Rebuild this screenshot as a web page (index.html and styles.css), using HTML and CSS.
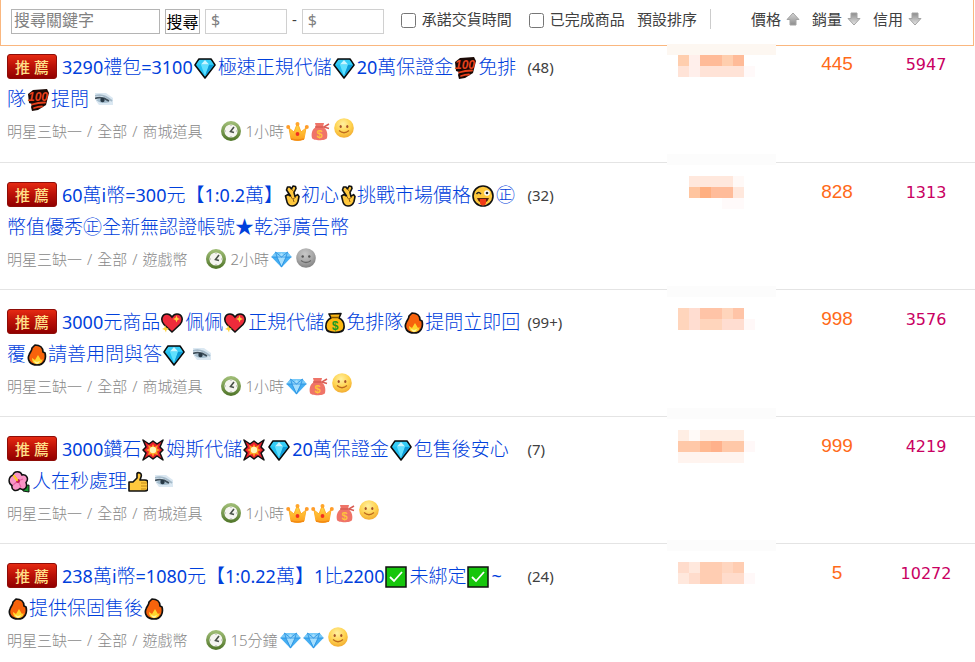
FILE: index.html
```html
<!DOCTYPE html>
<html lang="zh-Hant">
<head>
<meta charset="utf-8">
<meta name="viewport" content="width=device-width, initial-scale=1">
<title>商品列表</title>
<link rel="stylesheet" href="styles.css">
</head>
<body>
<svg class="paints" aria-hidden="true">
  <defs>
    <linearGradient id="g-arrow" x1="0" y1="0" x2="0" y2="1"><stop offset="0" stop-color="#d8d8d8"/><stop offset="1" stop-color="#8c8c8c"/></linearGradient>
    <linearGradient id="g-arrow-down" x1="0" y1="0" x2="0" y2="1"><stop offset="0" stop-color="#8c8c8c"/><stop offset="1" stop-color="#e6e6e6"/></linearGradient>
    <linearGradient id="g-ring" x1="0" y1="0" x2="0" y2="1"><stop offset="0" stop-color="#9dbb74"/><stop offset="1" stop-color="#557a2e"/></linearGradient>
    <linearGradient id="g-crown" x1="0" y1="0" x2="0" y2="1"><stop offset="0" stop-color="#ffe04a"/><stop offset="1" stop-color="#ff9d1c"/></linearGradient>
    <radialGradient id="g-smile" cx=".45" cy=".3" r=".75"><stop offset="0" stop-color="#fff0a0"/><stop offset=".55" stop-color="#ffd350"/><stop offset="1" stop-color="#f0a52c"/></radialGradient>
    <radialGradient id="g-grey" cx=".45" cy=".3" r=".75"><stop offset="0" stop-color="#c8c8c8"/><stop offset=".55" stop-color="#a8a8a8"/><stop offset="1" stop-color="#7c7c7c"/></radialGradient>
  </defs>
</svg>
<svg class="sprite" aria-hidden="true">
  <symbol id="gem" viewBox="0 0 22 22">
    <path d="M5 2h12l4 6-10 13L1 8z" fill="#22c0f0" stroke="#0a0a0a" stroke-width="1.6" stroke-linejoin="round"/>
    <path d="M5.4 3h11.2l3.2 4.6H2.200z" fill="#35cdf6"/>
    <path d="M7 7.500L11 3l4 4.500z" fill="#c8f5ff"/><path d="M7 8h8l-4 11z" fill="#5fe0ff"/><path d="M15 8h5l-9 11z" fill="#0f9ad6"/>
  </symbol>
  <symbol id="hundred" viewBox="0 0 22 22">
    <path d="M1 5l5-4 14-1 2 4-2 8-1 4-8 5-6 1-1-4 1-3-3-1z" fill="#1b0905"/>
    <text x="1" y="12" font-family="Liberation Sans, sans-serif" font-size="12" font-weight="bold" font-style="italic" fill="#e8401c">100</text>
    <path d="M5 15.500q6-2 13-2M7 19q4-1.500 8-1.500" stroke="#e8401c" stroke-width="1.800" fill="none" stroke-linecap="round"/>
  </symbol>
  <symbol id="fingers" viewBox="0 0 16 22">
    <path d="M8 21c-3 0-5-2.500-5.500-6L1.500 11l2.500-1.500L6.500 11 2.500 5 3.500 2 6 2l1.500 2L9 1l2.500.5.5 2-2 4 1 4 2.500-2 1.500 2-1 5c-1 3-3 4.500-6 4.500z" fill="#ffc83d" stroke="#111" stroke-width="1.600" stroke-linejoin="round"/>
    <path d="M6.500 11l2 3M10 7L7.500 4M12 12l-3 2 1 3" fill="none" stroke="#8b5b12"/>
  </symbol>
  <symbol id="wink" viewBox="0 0 22 22">
    <circle cx="11" cy="11" r="10" fill="#ffc83d" stroke="#111" stroke-width="1.600"/>
    <circle cx="15" cy="8" r="2.800" fill="#fff"/><circle cx="15" cy="8" r="1.300" fill="#222"/>
    <path d="M4.500 9q2-3 4.500 0" fill="none" stroke="#222" stroke-width="1.500"/>
    <path d="M5 13h12q-1 3-3 4H8q-2-1-3-4z" fill="#5c2410"/><path d="M8 14h6v3.500q0 3-3 3t-3-3z" fill="#f03a17"/>
  </symbol>
  <symbol id="heart" viewBox="0 0 22 22">
    <path d="M11 20L3 12.500C-1 8 1 2 6 2q3 0 5 3 2-3 5-3c5 0 7 6 3 10.500z" fill="#ee2b3b" stroke="#111" stroke-width="1.600"/>
    <path d="M15.500 3.500l1 2.500 2.500 1-2.500 1-1 2.500-1-2.500-2.500-1 2.500-1z" fill="#ffd23c"/>
    <path d="M4 13l1 2.500L8 17l-2.500 1L5 20.500 3.800 18 1 17l2.500-1.200z" fill="#ffd23c"/>
  </symbol>
  <symbol id="money" viewBox="1 0 20 22">
    <path d="M5 2l12-.500L15 6c4 2 5.500 6 5 10-.5 3-3 4.500-9 4.500S2.500 19 2 16c-.5-4 1-8 5-10z" fill="#fdb813" stroke="#111" stroke-width="1.600" stroke-linejoin="round"/>
    <path d="M7 5.500h8" stroke="#7c5300" stroke-width="1.500"/>
    <text x="11" y="18" text-anchor="middle" font-family="Liberation Sans, sans-serif" font-size="12" font-weight="bold" fill="#169b24">$</text>
  </symbol>
  <symbol id="fire" viewBox="1 0 20 22">
    <path d="M9 1c5 0 8 3 8 7l2 1c1.500 6-1 12-8 12S1 16 3 11c1-3 3-4 3-7z" fill="#f7630c" stroke="#111" stroke-width="1.700" stroke-linejoin="round"/>
    <path d="M6 14l3 2 3-5 3 5 1.500-1c0 3-2 5-5.500 5s-5-3-5-6z" fill="#ffd52e"/><path d="M8 17l3 1 3-1q-1 3-3 3t-3-3z" fill="#fff49c"/>
  </symbol>
  <symbol id="boom" viewBox="0 0 22 22">
    <path d="M1 1l6 4 4-3 4 3 6-4-3 7 3 3-3 3 3 7-6-4-4 3-4-3-6 4 3-7-3-3 3-3z" fill="#e9202b" stroke="#111" stroke-width="1.500" stroke-linejoin="round"/>
    <path d="M11 5l1.500 3L16 6l-1 3.500 3 1.500-3 1.500L16 16l-3.500-1-1.500 3-1.500-3L6 16l1-3.500L4 11l3-1.500L6 6l3.500 2z" fill="#ff9c20"/>
    <circle cx="11" cy="11" r="3.200" fill="#fff6b8"/>
  </symbol>
  <symbol id="flower" viewBox="0 0 22 22">
    <path d="M14 15l7-1v7l-6-1z" fill="#179b30" stroke="#111"/>
    <path d="M5 4C6-.5 13 0 14 4c5-1 7 4 4 7.500 2 5.500-2 8.500-6 6-4 4-9 1.500-8-3C0 12.500 0 6 5 4z" fill="#f995c6" stroke="#111" stroke-width="1.500"/>
    <path d="M10 10L7 5M10 10l5-2M10 10l3 6M10 10l-5 4" stroke="#e65fa5" stroke-width="1.200"/>
    <circle cx="10" cy="10" r="2" fill="#c01c50"/><path d="M9 9L6 5" stroke="#ffc928" stroke-width="2.200" stroke-linecap="round"/>
  </symbol>
  <symbol id="thumb" viewBox="1 0 20 22">
    <path d="M2 11h4l4-4V2.500Q11 1 13 2q2 1 1 4l-1 3h5q3 0 3 3v5q0 3-3 3H2z" fill="#ffc83d" stroke="#111" stroke-width="1.600" stroke-linejoin="round"/>
    <path d="M14 12h6M14 15h6M14 18h5" stroke="#b37b11" stroke-width=".8"/>
  </symbol>
  <symbol id="check" viewBox="0 0 22 22">
    <path d="M1 1h20v20H1z" fill="#16c60c" stroke="#111" stroke-width="1.500"/>
    <path d="M5 11l4 4 8-9" fill="none" stroke="#fff" stroke-width="1.800"/>
  </symbol>
  <symbol id="eye" viewBox="0 0 18 13">
    <path d="M0 0h11l7 5v7H4L1 8z" fill="#dbe8f2"/><path d="M0 3q8-3 17 5" fill="none" stroke="#a5bac9" stroke-width="1.800"/>
    <path d="M1 7q6-4 14 2-7 2-11 0z" fill="#a3bbcb"/><path d="M0 5.500q7-2.500 14 2.500" fill="none" stroke="#3e4e5a" stroke-width="1.700"/>
    <circle cx="7.500" cy="7" r="2.200" fill="#283946"/>
  </symbol>
  <symbol id="clock" viewBox="0 0 20 20">
    <circle cx="10" cy="10" r="8.300" fill="#f5f5f0" stroke="url(#g-ring)" stroke-width="3.400"/>
    <path d="M13 6l-3.500 4.500 3.500 1" fill="none" stroke="#485048" stroke-width="1.600"/>
    <path d="M10 4v1M10 15v1M4 10h1M15 10h1" stroke="#aaa"/>
  </symbol>
  <symbol id="crown" viewBox="0 0 23 19">
    <path d="M3 6l5 4 3.500-9L15 10l5-4-2 11q-6 3-13 0z" fill="url(#g-crown)" stroke="#ffad28"/>
    <circle cx="2.200" cy="5" r="2" fill="#ff9d2a"/><circle cx="20.800" cy="5" r="2" fill="#ff9d2a"/><circle cx="11.500" cy="2" r="2" fill="#ffa62c"/>
    <path d="M5 17q6 2 13 0" fill="none" stroke="#f28a13" stroke-width="1.500"/><circle cx="11.500" cy="12" r="1.900" fill="#f23020"/>
  </symbol>
  <symbol id="pouch" viewBox="0 0 19 19">
    <path d="M4 1h9l-1 4c4 2 5 7 4 11-1 3-14 3-15 0C0 12 1 7 5 5z" fill="#ef7468"/>
    <path d="M4 5h9l5-3M13 5l5 1.500" fill="none" stroke="#d95d54" stroke-width="1.500"/>
    <text x="8.500" y="15.500" text-anchor="middle" font-family="Liberation Sans, sans-serif" font-size="11" font-weight="bold" fill="#ffc23c">$</text>
  </symbol>
  <symbol id="smile" viewBox="0 0 20 20">
    <circle cx="10" cy="10" r="9.800" fill="url(#g-smile)"/><ellipse cx="6.700" cy="8.500" rx="1.100" ry="1.500" fill="#a5522a"/><ellipse cx="13.300" cy="8.500" rx="1.100" ry="1.500" fill="#a5522a"/>
    <path d="M5 12.500q5 4.500 10 0" fill="none" stroke="#bd6a1e" stroke-width="1.300"/>
  </symbol>
  <symbol id="smile-grey" viewBox="0 0 20 20">
    <circle cx="10" cy="10" r="9.800" fill="url(#g-grey)"/><circle cx="6.700" cy="8.500" r="1.200" fill="#555"/><circle cx="13.300" cy="8.500" r="1.200" fill="#555"/>
    <path d="M5 12.500q5 4 10 0" fill="none" stroke="#696969" stroke-width="1.300"/>
  </symbol>
  <symbol id="diamond" viewBox="0 0 21 17">
    <path d="M4.500 1h12L20.500 6l-10 10.500L.5 6z" fill="#45aef2"/><path d="M4.500 1h12L20.500 6H.5z" fill="#79caf8"/>
    <path d="M6 6l4.500-4L15 6l-4.500 9z" fill="#a5defd"/><path d="M.5 6h20M6 6l4.500 10L15 6M6 6L4.500 1 10.500 6l6-5L15 6" fill="none" stroke="#288fe0" stroke-width=".8"/>
  </symbol>
  <symbol id="up" viewBox="0 0 14 14"><path d="M7 1l6 6.500h-3V13H4V7.500H1z" fill="url(#g-arrow)" stroke="#a4a4a4"/></symbol>
  <symbol id="down" viewBox="0 0 14 14"><path d="M7 13l6-6.500h-3V1H4v5.500H1z" fill="url(#g-arrow-down)" stroke="#a4a4a4"/></symbol>
</svg>

<form class="toolbar">
  <input class="field keyword" type="text" placeholder="搜尋關鍵字" aria-label="搜尋關鍵字">
  <button class="search" type="button">搜尋</button>
  <div class="range">
    <input class="field price-field" type="text" placeholder="$" aria-label="最低價格">
    <span>-</span>
    <input class="field price-field" type="text" placeholder="$" aria-label="最高價格">
  </div>
  <label class="option"><input type="checkbox">承諾交貨時間</label>
  <label class="option"><input type="checkbox">已完成商品</label>
  <a class="default-sort" href="#">預設排序</a>
  <nav class="sorts">
    <a href="#">價格<svg><use href="#up"/></svg></a>
    <a href="#">銷量<svg><use href="#down"/></svg></a>
    <a href="#">信用<svg><use href="#down"/></svg></a>
  </nav>
</form>

<table class="listing">
  <colgroup><col class="c-title"><col><col class="c-price"><col class="c-sales"><col class="c-credit"></colgroup>
  <tbody>
    <tr>
      <td>
        <a class="title" href="#"><span class="badge"><b>推</b><b>薦</b></span><span class="n">3290</span>禮包<span class="n">=3100</span><svg><use href="#gem"/></svg>極速正規代儲<svg><use href="#gem"/></svg><span class="n">20</span>萬保證金<svg><use href="#hundred"/></svg>免排<br>隊<svg><use href="#hundred"/></svg>提問<svg class="eye"><use href="#eye"/></svg></a>
        <div class="meta"><span>明星三缺一</span><i>/</i><span>全部</span><i>/</i><span>商城道具</span><svg class="clock"><use href="#clock"/></svg><span>1小時</span><svg class="crown"><use href="#crown"/></svg><svg class="pouch"><use href="#pouch"/></svg><svg class="smile raised"><use href="#smile"/></svg></div>
      </td>
      <td class="replies">(48)</td>
      <td class="price"><svg class="mosaic first" viewBox="0 0 109 44"><path fill="#fdf7f1" d="M0 0h109v11H0z"/><path fill="#ffceae" d="M11 11h11v11H11zM55 11h11v11H55z"/><path fill="#ffefeb" d="M22 11h11v22H22z"/><path fill="#ffbb98" d="M33 11h22v11H33zM66 11h11v11H66z"/><path fill="#ffe3d7" d="M11 22h11v11H11zM33 22h44v11H33z"/><path fill="#fff9f9" d="M77 22h11v11H77z"/></svg></td>
      <td class="sales">445</td><td class="credit">5947</td>
    </tr>
    <tr>
      <td>
        <a class="title" href="#"><span class="badge"><b>推</b><b>薦</b></span><span class="n">60</span>萬<span class="n">i</span>幣<span class="n">=300</span>元【<span class="n">1:0.2</span>萬】<svg class="narrow"><use href="#fingers"/></svg>初心<svg class="narrow"><use href="#fingers"/></svg>挑戰市場價格<svg><use href="#wink"/></svg>㊣<br>幣值優秀㊣全新無認證帳號★乾淨廣告幣</a>
        <div class="meta"><span>明星三缺一</span><i>/</i><span>全部</span><i>/</i><span>遊戲幣</span><svg class="clock"><use href="#clock"/></svg><span>2小時</span><svg class="diamond"><use href="#diamond"/></svg><svg class="smile"><use href="#smile-grey"/></svg></div>
      </td>
      <td class="replies">(32)</td>
      <td class="price"><svg class="mosaic tall" viewBox="0 0 109 55"><path fill="#fcfcfc" d="M0 0h109v11H0z"/><path fill="#ffe8dd" d="M22 22h44v11H22zM66 33h11v11H66z"/><path fill="#fff9f7" d="M66 22h11v11H66z"/><path fill="#ffc59f" d="M22 33h11v11H22z"/><path fill="#ffaf80" d="M33 33h11v11H33z"/><path fill="#ffbc9a" d="M44 33h22v11H44z"/><path fill="#fffafa" d="M55 44h22v11H55z"/></svg></td>
      <td class="sales">828</td><td class="credit">1313</td>
    </tr>
    <tr>
      <td>
        <a class="title" href="#"><span class="badge"><b>推</b><b>薦</b></span><span class="n">3000</span>元商品<svg><use href="#heart"/></svg>佩佩<svg><use href="#heart"/></svg>正規代儲<svg class="slim"><use href="#money"/></svg>免排隊<svg class="slim"><use href="#fire"/></svg>提問立即回<br>覆<svg class="slim"><use href="#fire"/></svg>請善用問與答<svg><use href="#gem"/></svg><svg class="eye"><use href="#eye"/></svg></a>
        <div class="meta"><span>明星三缺一</span><i>/</i><span>全部</span><i>/</i><span>商城道具</span><svg class="clock"><use href="#clock"/></svg><span>1小時</span><svg class="diamond"><use href="#diamond"/></svg><svg class="pouch"><use href="#pouch"/></svg><svg class="smile raised"><use href="#smile"/></svg></div>
      </td>
      <td class="replies">(99+)</td>
      <td class="price"><svg class="mosaic" viewBox="0 0 109 44"><path fill="#fcfcfc" d="M0 0h109v11H0z"/><path fill="#ffd5bc" d="M11 22h11v22H11zM33 33h22v11H33zM55 22h11v11H55z"/><path fill="#ffddd1" d="M22 22h11v22H22zM55 33h22v11H55z"/><path fill="#ffc4a7" d="M33 22h22v11H33zM66 22h11v11H66z"/><path fill="#fff8f8" d="M77 33h11v11H77z"/></svg></td>
      <td class="sales">998</td><td class="credit">3576</td>
    </tr>
    <tr>
      <td>
        <a class="title" href="#"><span class="badge"><b>推</b><b>薦</b></span><span class="n">3000</span>鑽石<svg><use href="#boom"/></svg>姆斯代儲<svg><use href="#boom"/></svg><svg><use href="#gem"/></svg><span class="n">20</span>萬保證金<svg><use href="#gem"/></svg>包售後安心<br><svg><use href="#flower"/></svg>人在秒處理<svg class="slim"><use href="#thumb"/></svg><svg class="eye"><use href="#eye"/></svg></a>
        <div class="meta"><span>明星三缺一</span><i>/</i><span>全部</span><i>/</i><span>商城道具</span><svg class="clock"><use href="#clock"/></svg><span>1小時</span><svg class="crown"><use href="#crown"/></svg><svg class="crown"><use href="#crown"/></svg><svg class="pouch"><use href="#pouch"/></svg><svg class="smile raised"><use href="#smile"/></svg></div>
      </td>
      <td class="replies">(7)</td>
      <td class="price"><svg class="mosaic tall" viewBox="0 0 109 55"><path fill="#fcfcfc" d="M0 0h109v11H0z"/><path fill="#ffeee4" d="M11 22h11v11H11zM33 22h44v11H33z"/><path fill="#fffaf8" d="M22 22h11v11H22z"/><path fill="#ffc8a8" d="M11 33h22v11H11zM55 33h22v11H55z"/><path fill="#ffb991" d="M33 33h11v11H33z"/><path fill="#ffb18b" d="M44 33h11v11H44z"/><path fill="#fff4ef" d="M11 44h66v11H11z"/><path fill="#fff8f8" d="M77 33h11v11H77z"/></svg></td>
      <td class="sales">999</td><td class="credit">4219</td>
    </tr>
    <tr>
      <td>
        <a class="title" href="#"><span class="badge"><b>推</b><b>薦</b></span><span class="n">238</span>萬<span class="n">i</span>幣<span class="n">=1080</span>元【<span class="n">1:0.22</span>萬】<span class="n">1</span>比<span class="n">2200</span><svg><use href="#check"/></svg>未綁定<svg><use href="#check"/></svg><span class="n">~</span><br><svg class="slim"><use href="#fire"/></svg>提供保固售後<svg class="slim"><use href="#fire"/></svg></a>
        <div class="meta"><span>明星三缺一</span><i>/</i><span>全部</span><i>/</i><span>遊戲幣</span><svg class="clock"><use href="#clock"/></svg><span>15分鐘</span><svg class="diamond"><use href="#diamond"/></svg><svg class="diamond"><use href="#diamond"/></svg><svg class="smile raised"><use href="#smile"/></svg></div>
      </td>
      <td class="replies">(24)</td>
      <td class="price"><svg class="mosaic" viewBox="0 0 109 44"><path fill="#fcfcfc" d="M0 0h109v11H0z"/><path fill="#ffdccc" d="M11 22h11v11H11zM22 33h11v11H22zM55 33h22v11H55z"/><path fill="#ffe8dd" d="M22 22h11v11H22zM11 33h11v11H11z"/><path fill="#ffcdb2" d="M33 22h22v22H33zM66 22h11v11H66z"/><path fill="#ffd6c0" d="M55 22h11v11H55z"/><path fill="#fff8f8" d="M77 33h11v11H77z"/></svg></td>
      <td class="sales">5</td><td class="credit">10272</td>
    </tr>
  </tbody>
</table>
</body>
</html>
```
FILE: styles.css
```css
* { box-sizing: border-box; }

body {
  margin: 0;
  background: #fff;
  color: #404040;
  font: 15px/20px "Noto Sans", "Noto Sans CJK TC", sans-serif;
}

a { color: inherit; text-decoration: none; }
.paints { position: absolute; width: 0; height: 0; }
.sprite { display: none; }

/* search and sort bar */
.toolbar {
  display: flex;
  align-items: flex-start;
  height: 46px;
  margin-right: 1px;
  padding: 9px 10px 0;
  border: solid #fab77f;
  border-width: 0 1px 1px;
  white-space: nowrap;
}

.field, .search {
  height: 25px;
  padding: 0 2px 3px;
  border: 1px solid #b4b4b4;
  border-radius: 0;
  background: #fff;
  font: 16px/20px "Noto Sans", "Noto Sans CJK TC", sans-serif;
}
.field::placeholder { color: #808080; opacity: 1; }
.keyword { width: 149px; }
.search { width: 35px; margin: 0 5px; padding: 0; color: #000; }
.range { display: flex; gap: 5px; margin-right: 17px; }
.price-field { width: 82px; padding-left: 5px; border-color: #d0d0d0; }

.option { display: flex; align-items: center; gap: 6px; margin-right: 17px; }
.option input { width: 15px; height: 15px; margin: 2px 0 0; }
.option + .default-sort { margin-left: -5px; }
.default-sort { padding-right: 13px; border-right: 1px solid #ccc; }
.sorts { display: flex; gap: 12px; margin-left: 40px; }
.sorts a { display: flex; align-items: center; gap: 5px; }
.sorts svg { width: 14px; height: 14px; }

/* product rows */
.listing { width: 100%; border-collapse: collapse; table-layout: fixed; }
.c-title { width: 54%; }
.c-price { width: 109px; }
.c-sales { width: 122px; }
.c-credit { width: 77px; }

.listing tr { border-bottom: 1px solid #e4e4e4; }
.listing td { padding: 16px 0 14px; vertical-align: top; white-space: nowrap; line-height: 32px; }
.listing tr:first-child td { padding-top: 5px; padding-bottom: 15px; }
.listing td:first-child { padding-left: 7px; }

.title { display: block; color: #0040dc; font-size: 19px; font-weight: 300; line-height: 32px; height: 64px; }
.title .n { font-size: 18px; font-weight: 400; }
.title svg { width: 22px; height: 22px; margin: 0 2px 0 1px; vertical-align: -5px; }
.title svg.slim { width: 20px; margin: 0 1px; }
.title svg.narrow { width: 16px; margin: 0 1px; }
.title svg.eye { width: 18px; height: 13px; margin-left: 6px; vertical-align: 0; }

.badge {
  display: inline-flex;
  justify-content: center;
  align-items: center;
  gap: 4px;
  width: 50px;
  height: 25px;
  margin: 3px 5px 0 0;
  border: 1px solid #8e0d08;
  border-radius: 3px;
  background: linear-gradient(#e52a12, #bd1208 45%, #920000);
  color: #ffe08a;
  font-size: 15px;
  line-height: 20px;
  vertical-align: top;
}
.badge b { font-weight: 500; }

.meta { display: flex; align-items: center; height: 32px; color: #888; line-height: 20px; font-weight: 300; }
.meta i { margin: 0 5px; font-style: normal; }
.meta .clock { width: 20px; height: 20px; margin: 0 4px 0 19px; }
.crown { width: 23px; height: 19px; margin-left: 2px; }
.diamond { width: 21px; height: 17px; margin-left: 2px; }
.pouch { width: 19px; height: 19px; margin-left: 2px; }
.smile { width: 20px; height: 20px; margin: 0 0 2px 4px; }
.smile.raised { margin-bottom: 6px; }

.replies { text-indent: 1px; }
.price { position: relative; }
/* pixelated price, laid over the row divider */
.mosaic { position: absolute; left: 0; top: -4px; width: 109px; }
.mosaic.first { top: -2px; }
.mosaic.tall { top: -9px; }
.mosaic { height: 44px; }
.mosaic.tall { height: 55px; }

.sales, .credit { text-align: center; }
.listing .sales { color: #ff6a19; font-family: "Liberation Sans", sans-serif; font-size: 19px; line-height: 25px; }
.listing .credit { padding-right: 21px; color: #c90062; font-family: "DejaVu Sans", sans-serif; font-size: 16px; line-height: 28px; }
```
